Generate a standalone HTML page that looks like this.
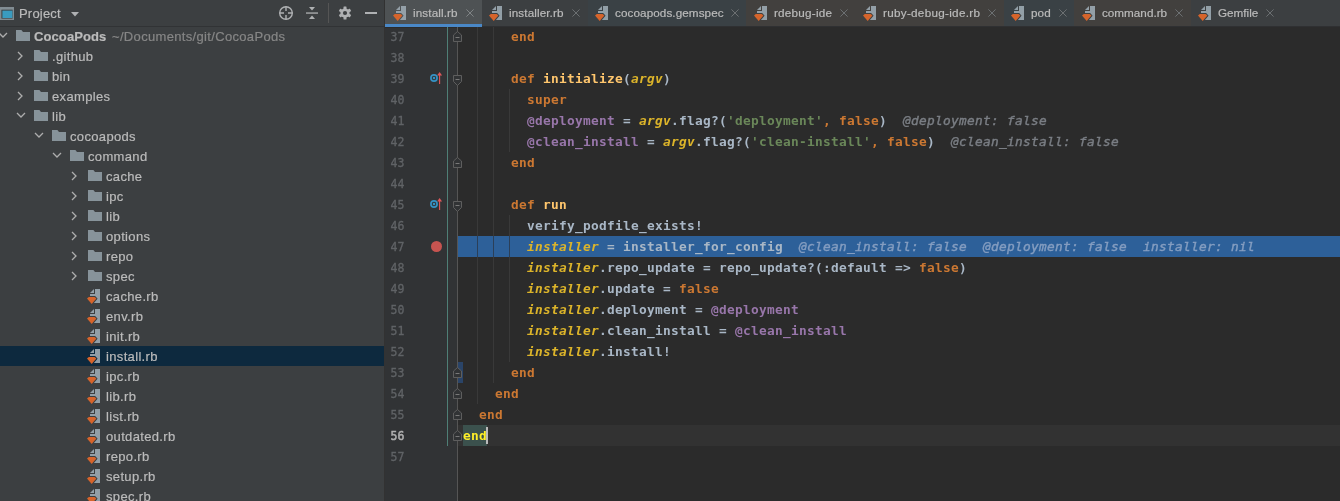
<!DOCTYPE html>
<html lang="en"><head><meta charset="utf-8"><title>CocoaPods – install.rb</title>
<style>
*{box-sizing:border-box}
html,body{margin:0;padding:0;background:#2b2b2b;overflow:hidden}
body{width:1340px;height:501px;position:relative;font-family:"Liberation Sans",Arial,sans-serif;font-size:13px;color:#bbbbbb}
#root{position:absolute;left:0;top:0;width:1340px;height:501px;overflow:hidden;background:#2b2b2b}
.abs,.ic,.t,.row,.tab,.ln,.code,.rect{position:absolute}
.ic{display:block;overflow:visible}
.t,.ln,.code{will-change:transform}
.t{white-space:pre;line-height:20px;height:20px;color:#bbbbbb;-webkit-text-stroke:0.2px}
#sidebar{position:absolute;left:0;top:0;width:384px;height:501px;background:#3c3f41;overflow:hidden}
#sbhead{position:absolute;left:0;top:0;width:384px;height:27px;z-index:2;background:#3c3f41;border-bottom:1px solid #313335}
#tabs{position:absolute;left:385px;top:0;width:955px;height:27px;background:#3c3f41;border-bottom:1px solid #2f3032}
.tab{top:0;height:26px}
.tt{font-size:11.7px}
#gutter{position:absolute;left:385px;top:28px;width:73px;height:473px;background:#313335}
.ln{left:385px;width:36px;text-align:left;padding-left:5.5px;padding-top:0.5px;font-family:"DejaVu Sans Mono","Liberation Mono",monospace;font-size:11.5px;line-height:21px;height:21px;color:#606366;-webkit-text-stroke:0.3px #606366;white-space:pre}
.code{left:463px;font-family:"DejaVu Sans Mono","Liberation Mono",monospace;font-size:12.8px;letter-spacing:0.2944px;line-height:21px;height:21px;color:#a9b7c6;white-space:pre}
.kw{color:#cc7832;font-weight:bold}
.fn{color:#ffc66d;font-weight:bold}
.pv{color:#dcb42a;font-weight:bold;font-style:italic}
.iv{color:#9876aa;font-weight:bold}
.id{color:#a9b7c6;font-weight:bold}
.st{color:#6a8759;font-weight:bold}
.hint{color:#7a7e84;font-style:italic;font-weight:normal;-webkit-text-stroke:0.4px #7a7e84}
.hint2{color:#849dc0;font-style:italic;font-weight:normal;-webkit-text-stroke:0.4px #849dc0}
</style></head><body><div id="root">

<div id="sidebar">
<div id="sbhead">
<svg class="ic" style="left:-1px;top:5px" width="16" height="16" viewBox="0 0 16 16">
<rect x="1.7" y="2.7" width="12.6" height="11.6" fill="none" stroke="#87939a" stroke-width="1.4" opacity=".9"/>
<rect x="1.7" y="2.7" width="12.6" height="2" fill="#87939a" opacity=".9"/>
<rect x="3.4" y="5.6" width="10" height="7.4" fill="#3a9bbf"/>
</svg>
<span class="t" style="left:19px;top:4px;letter-spacing:0.2px">Project</span>
<svg class="ic" style="left:70px;top:10px" width="10" height="8" viewBox="0 0 10 8"><path d="M1 2 L9 2 L5 6.6 Z" fill="#afb1b3"/></svg>
<svg class="ic" style="left:278px;top:5px" width="16" height="16" viewBox="0 0 16 16">
<circle cx="8" cy="8" r="6.3" fill="none" stroke="#afb1b3" stroke-width="1.4"/>
<path d="M8 1.5 V6 M8 10 V14.5 M1.5 8 H6 M10 8 H14.5" stroke="#afb1b3" stroke-width="1.4" fill="none"/>
</svg>
<svg class="ic" style="left:304px;top:5px" width="16" height="16" viewBox="0 0 16 16">
<rect x="2" y="7.4" width="12" height="1.3" fill="#afb1b3"/>
<path d="M5 2 L11 2 L8 5.4 Z" fill="#afb1b3"/>
<path d="M5 14 L11 14 L8 10.6 Z" fill="#afb1b3"/>
</svg>
<div class="rect" style="left:328px;top:3px;width:1px;height:20px;background:#555555"></div>
<svg class="ic" style="left:337px;top:5px" width="16" height="16" viewBox="0 0 16 16">
<g fill="#afb1b3"><circle cx="8" cy="8" r="4.6"/>
<g><rect x="6.5" y="1.6" width="3" height="12.8" rx=".5"/>
<rect x="6.5" y="1.6" width="3" height="12.8" rx=".5" transform="rotate(60 8 8)"/>
<rect x="6.5" y="1.6" width="3" height="12.8" rx=".5" transform="rotate(120 8 8)"/></g></g>
<circle cx="8" cy="8" r="2.1" fill="#3c3f41"/>
</svg>
<div class="rect" style="left:365px;top:12.2px;width:12px;height:1.6px;background:#afb1b3"></div>
</div>
<svg class="ic" style="left:-5.5px;top:27px" width="16" height="16" viewBox="0 0 16 16">
<path d="M4 6 L8 10 L12 6" fill="none" stroke="#adadad" stroke-width="1.3"/>
</svg>
<svg class="ic" style="left:15px;top:28px" width="16" height="16" viewBox="0 0 16 16">
<path d="M1 2 L6.4 2 L8 4.1 L15 4.1 L15 13 L1 13 Z" fill="#87939a"/>
</svg>
<span class="t" style="left:34px;top:27px;font-weight:bold;letter-spacing:0.1px">CocoaPods</span>
<span class="t" style="left:112px;top:27px;color:#868686;letter-spacing:0.33px">~/Documents/git/CocoaPods</span>
<svg class="ic" style="left:12px;top:47.7px" width="16" height="16" viewBox="0 0 16 16">
<path d="M6 4 L10 8 L6 12" fill="none" stroke="#adadad" stroke-width="1.3"/>
</svg>
<svg class="ic" style="left:33px;top:48px" width="16" height="16" viewBox="0 0 16 16">
<path d="M1 2 L6.4 2 L8 4.1 L15 4.1 L15 13 L1 13 Z" fill="#87939a"/>
</svg>
<span class="t" style="left:52px;top:47px;letter-spacing:0.34px">.github</span>
<svg class="ic" style="left:12px;top:67.7px" width="16" height="16" viewBox="0 0 16 16">
<path d="M6 4 L10 8 L6 12" fill="none" stroke="#adadad" stroke-width="1.3"/>
</svg>
<svg class="ic" style="left:33px;top:68px" width="16" height="16" viewBox="0 0 16 16">
<path d="M1 2 L6.4 2 L8 4.1 L15 4.1 L15 13 L1 13 Z" fill="#87939a"/>
</svg>
<span class="t" style="left:52px;top:67px;letter-spacing:0.34px">bin</span>
<svg class="ic" style="left:12px;top:87.7px" width="16" height="16" viewBox="0 0 16 16">
<path d="M6 4 L10 8 L6 12" fill="none" stroke="#adadad" stroke-width="1.3"/>
</svg>
<svg class="ic" style="left:33px;top:88px" width="16" height="16" viewBox="0 0 16 16">
<path d="M1 2 L6.4 2 L8 4.1 L15 4.1 L15 13 L1 13 Z" fill="#87939a"/>
</svg>
<span class="t" style="left:52px;top:87px;letter-spacing:0.34px">examples</span>
<svg class="ic" style="left:12.5px;top:107px" width="16" height="16" viewBox="0 0 16 16">
<path d="M4 6 L8 10 L12 6" fill="none" stroke="#adadad" stroke-width="1.3"/>
</svg>
<svg class="ic" style="left:33px;top:108px" width="16" height="16" viewBox="0 0 16 16">
<path d="M1 2 L6.4 2 L8 4.1 L15 4.1 L15 13 L1 13 Z" fill="#87939a"/>
</svg>
<span class="t" style="left:52px;top:107px;letter-spacing:0.34px">lib</span>
<svg class="ic" style="left:30.5px;top:127px" width="16" height="16" viewBox="0 0 16 16">
<path d="M4 6 L8 10 L12 6" fill="none" stroke="#adadad" stroke-width="1.3"/>
</svg>
<svg class="ic" style="left:51px;top:128px" width="16" height="16" viewBox="0 0 16 16">
<path d="M1 2 L6.4 2 L8 4.1 L15 4.1 L15 13 L1 13 Z" fill="#87939a"/>
</svg>
<span class="t" style="left:70px;top:127px;letter-spacing:0.34px">cocoapods</span>
<svg class="ic" style="left:48.5px;top:147px" width="16" height="16" viewBox="0 0 16 16">
<path d="M4 6 L8 10 L12 6" fill="none" stroke="#adadad" stroke-width="1.3"/>
</svg>
<svg class="ic" style="left:69px;top:148px" width="16" height="16" viewBox="0 0 16 16">
<path d="M1 2 L6.4 2 L8 4.1 L15 4.1 L15 13 L1 13 Z" fill="#87939a"/>
</svg>
<span class="t" style="left:88px;top:147px;letter-spacing:0.34px">command</span>
<svg class="ic" style="left:66px;top:167.7px" width="16" height="16" viewBox="0 0 16 16">
<path d="M6 4 L10 8 L6 12" fill="none" stroke="#adadad" stroke-width="1.3"/>
</svg>
<svg class="ic" style="left:87px;top:168px" width="16" height="16" viewBox="0 0 16 16">
<path d="M1 2 L6.4 2 L8 4.1 L15 4.1 L15 13 L1 13 Z" fill="#87939a"/>
</svg>
<span class="t" style="left:106px;top:167px;letter-spacing:0.34px">cache</span>
<svg class="ic" style="left:66px;top:187.7px" width="16" height="16" viewBox="0 0 16 16">
<path d="M6 4 L10 8 L6 12" fill="none" stroke="#adadad" stroke-width="1.3"/>
</svg>
<svg class="ic" style="left:87px;top:188px" width="16" height="16" viewBox="0 0 16 16">
<path d="M1 2 L6.4 2 L8 4.1 L15 4.1 L15 13 L1 13 Z" fill="#87939a"/>
</svg>
<span class="t" style="left:106px;top:187px;letter-spacing:0.34px">ipc</span>
<svg class="ic" style="left:66px;top:207.7px" width="16" height="16" viewBox="0 0 16 16">
<path d="M6 4 L10 8 L6 12" fill="none" stroke="#adadad" stroke-width="1.3"/>
</svg>
<svg class="ic" style="left:87px;top:208px" width="16" height="16" viewBox="0 0 16 16">
<path d="M1 2 L6.4 2 L8 4.1 L15 4.1 L15 13 L1 13 Z" fill="#87939a"/>
</svg>
<span class="t" style="left:106px;top:207px;letter-spacing:0.34px">lib</span>
<svg class="ic" style="left:66px;top:227.7px" width="16" height="16" viewBox="0 0 16 16">
<path d="M6 4 L10 8 L6 12" fill="none" stroke="#adadad" stroke-width="1.3"/>
</svg>
<svg class="ic" style="left:87px;top:228px" width="16" height="16" viewBox="0 0 16 16">
<path d="M1 2 L6.4 2 L8 4.1 L15 4.1 L15 13 L1 13 Z" fill="#87939a"/>
</svg>
<span class="t" style="left:106px;top:227px;letter-spacing:0.34px">options</span>
<svg class="ic" style="left:66px;top:247.7px" width="16" height="16" viewBox="0 0 16 16">
<path d="M6 4 L10 8 L6 12" fill="none" stroke="#adadad" stroke-width="1.3"/>
</svg>
<svg class="ic" style="left:87px;top:248px" width="16" height="16" viewBox="0 0 16 16">
<path d="M1 2 L6.4 2 L8 4.1 L15 4.1 L15 13 L1 13 Z" fill="#87939a"/>
</svg>
<span class="t" style="left:106px;top:247px;letter-spacing:0.34px">repo</span>
<svg class="ic" style="left:66px;top:267.7px" width="16" height="16" viewBox="0 0 16 16">
<path d="M6 4 L10 8 L6 12" fill="none" stroke="#adadad" stroke-width="1.3"/>
</svg>
<svg class="ic" style="left:87px;top:268px" width="16" height="16" viewBox="0 0 16 16">
<path d="M1 2 L6.4 2 L8 4.1 L15 4.1 L15 13 L1 13 Z" fill="#87939a"/>
</svg>
<span class="t" style="left:106px;top:267px;letter-spacing:0.34px">spec</span>
<svg class="ic" style="left:87px;top:288px" width="16" height="16" viewBox="0 0 16 16">
<g fill="#9aa7b0" fill-opacity=".92"><path d="M7 1 L3 5 H7 Z"/>
<path d="M8 1 H13 V15 H6.9 L10.15 11.26 L10.5 10.4 L8.1 8 H3 V6 H8 Z"/></g>
<path d="M0 10.6 L1.8 9 H7.6 L9.4 10.6 L4.7 16 Z" fill="#d6642b"/>
</svg>
<span class="t" style="left:106px;top:287px;letter-spacing:0.34px">cache.rb</span>
<svg class="ic" style="left:87px;top:308px" width="16" height="16" viewBox="0 0 16 16">
<g fill="#9aa7b0" fill-opacity=".92"><path d="M7 1 L3 5 H7 Z"/>
<path d="M8 1 H13 V15 H6.9 L10.15 11.26 L10.5 10.4 L8.1 8 H3 V6 H8 Z"/></g>
<path d="M0 10.6 L1.8 9 H7.6 L9.4 10.6 L4.7 16 Z" fill="#d6642b"/>
</svg>
<span class="t" style="left:106px;top:307px;letter-spacing:0.34px">env.rb</span>
<svg class="ic" style="left:87px;top:328px" width="16" height="16" viewBox="0 0 16 16">
<g fill="#9aa7b0" fill-opacity=".92"><path d="M7 1 L3 5 H7 Z"/>
<path d="M8 1 H13 V15 H6.9 L10.15 11.26 L10.5 10.4 L8.1 8 H3 V6 H8 Z"/></g>
<path d="M0 10.6 L1.8 9 H7.6 L9.4 10.6 L4.7 16 Z" fill="#d6642b"/>
</svg>
<span class="t" style="left:106px;top:327px;letter-spacing:0.34px">init.rb</span>
<div class="rect" style="left:0;top:346px;width:384px;height:20px;background:#0d293e"></div>
<svg class="ic" style="left:87px;top:348px" width="16" height="16" viewBox="0 0 16 16">
<g fill="#9aa7b0" fill-opacity=".92"><path d="M7 1 L3 5 H7 Z"/>
<path d="M8 1 H13 V15 H6.9 L10.15 11.26 L10.5 10.4 L8.1 8 H3 V6 H8 Z"/></g>
<path d="M0 10.6 L1.8 9 H7.6 L9.4 10.6 L4.7 16 Z" fill="#d6642b"/>
</svg>
<span class="t" style="left:106px;top:347px;letter-spacing:0.34px">install.rb</span>
<svg class="ic" style="left:87px;top:368px" width="16" height="16" viewBox="0 0 16 16">
<g fill="#9aa7b0" fill-opacity=".92"><path d="M7 1 L3 5 H7 Z"/>
<path d="M8 1 H13 V15 H6.9 L10.15 11.26 L10.5 10.4 L8.1 8 H3 V6 H8 Z"/></g>
<path d="M0 10.6 L1.8 9 H7.6 L9.4 10.6 L4.7 16 Z" fill="#d6642b"/>
</svg>
<span class="t" style="left:106px;top:367px;letter-spacing:0.34px">ipc.rb</span>
<svg class="ic" style="left:87px;top:388px" width="16" height="16" viewBox="0 0 16 16">
<g fill="#9aa7b0" fill-opacity=".92"><path d="M7 1 L3 5 H7 Z"/>
<path d="M8 1 H13 V15 H6.9 L10.15 11.26 L10.5 10.4 L8.1 8 H3 V6 H8 Z"/></g>
<path d="M0 10.6 L1.8 9 H7.6 L9.4 10.6 L4.7 16 Z" fill="#d6642b"/>
</svg>
<span class="t" style="left:106px;top:387px;letter-spacing:0.34px">lib.rb</span>
<svg class="ic" style="left:87px;top:408px" width="16" height="16" viewBox="0 0 16 16">
<g fill="#9aa7b0" fill-opacity=".92"><path d="M7 1 L3 5 H7 Z"/>
<path d="M8 1 H13 V15 H6.9 L10.15 11.26 L10.5 10.4 L8.1 8 H3 V6 H8 Z"/></g>
<path d="M0 10.6 L1.8 9 H7.6 L9.4 10.6 L4.7 16 Z" fill="#d6642b"/>
</svg>
<span class="t" style="left:106px;top:407px;letter-spacing:0.34px">list.rb</span>
<svg class="ic" style="left:87px;top:428px" width="16" height="16" viewBox="0 0 16 16">
<g fill="#9aa7b0" fill-opacity=".92"><path d="M7 1 L3 5 H7 Z"/>
<path d="M8 1 H13 V15 H6.9 L10.15 11.26 L10.5 10.4 L8.1 8 H3 V6 H8 Z"/></g>
<path d="M0 10.6 L1.8 9 H7.6 L9.4 10.6 L4.7 16 Z" fill="#d6642b"/>
</svg>
<span class="t" style="left:106px;top:427px;letter-spacing:0.34px">outdated.rb</span>
<svg class="ic" style="left:87px;top:448px" width="16" height="16" viewBox="0 0 16 16">
<g fill="#9aa7b0" fill-opacity=".92"><path d="M7 1 L3 5 H7 Z"/>
<path d="M8 1 H13 V15 H6.9 L10.15 11.26 L10.5 10.4 L8.1 8 H3 V6 H8 Z"/></g>
<path d="M0 10.6 L1.8 9 H7.6 L9.4 10.6 L4.7 16 Z" fill="#d6642b"/>
</svg>
<span class="t" style="left:106px;top:447px;letter-spacing:0.34px">repo.rb</span>
<svg class="ic" style="left:87px;top:468px" width="16" height="16" viewBox="0 0 16 16">
<g fill="#9aa7b0" fill-opacity=".92"><path d="M7 1 L3 5 H7 Z"/>
<path d="M8 1 H13 V15 H6.9 L10.15 11.26 L10.5 10.4 L8.1 8 H3 V6 H8 Z"/></g>
<path d="M0 10.6 L1.8 9 H7.6 L9.4 10.6 L4.7 16 Z" fill="#d6642b"/>
</svg>
<span class="t" style="left:106px;top:467px;letter-spacing:0.34px">setup.rb</span>
<svg class="ic" style="left:87px;top:488px" width="16" height="16" viewBox="0 0 16 16">
<g fill="#9aa7b0" fill-opacity=".92"><path d="M7 1 L3 5 H7 Z"/>
<path d="M8 1 H13 V15 H6.9 L10.15 11.26 L10.5 10.4 L8.1 8 H3 V6 H8 Z"/></g>
<path d="M0 10.6 L1.8 9 H7.6 L9.4 10.6 L4.7 16 Z" fill="#d6642b"/>
</svg>
<span class="t" style="left:106px;top:487px;letter-spacing:0.34px">spec.rb</span>
</div>
<div class="rect" style="left:384px;top:0;width:1px;height:501px;background:#323232"></div>
<div id="tabs"></div>
<div class="tab" style="left:385px;width:97px;background:#4e5254"></div>
<svg class="ic" style="left:393px;top:5px" width="16" height="16" viewBox="0 0 16 16">
<g fill="#9aa7b0" fill-opacity=".92"><path d="M7 1 L3 5 H7 Z"/>
<path d="M8 1 H13 V15 H6.9 L10.15 11.26 L10.5 10.4 L8.1 8 H3 V6 H8 Z"/></g>
<path d="M0 10.6 L1.8 9 H7.6 L9.4 10.6 L4.7 16 Z" fill="#d6642b"/>
</svg>
<span class="t tt" style="left:413px;top:3px;letter-spacing:0.11px">install.rb</span>
<svg class="ic" style="left:462.2px;top:5px" width="16" height="16" viewBox="0 0 16 16"><path d="M4.4 4.4 L11.6 11.6 M11.6 4.4 L4.4 11.6" stroke="#808486" stroke-width="1" fill="none"/></svg>
<div class="rect" style="left:385px;top:24px;width:97px;height:3px;background:#4a88c7"></div>
<svg class="ic" style="left:489px;top:5px" width="16" height="16" viewBox="0 0 16 16">
<g fill="#9aa7b0" fill-opacity=".92"><path d="M7 1 L3 5 H7 Z"/>
<path d="M8 1 H13 V15 H6.9 L10.15 11.26 L10.5 10.4 L8.1 8 H3 V6 H8 Z"/></g>
<path d="M0 10.6 L1.8 9 H7.6 L9.4 10.6 L4.7 16 Z" fill="#d6642b"/>
</svg>
<span class="t tt" style="left:509.2px;top:3px;letter-spacing:0.11px">installer.rb</span>
<svg class="ic" style="left:568px;top:5px" width="16" height="16" viewBox="0 0 16 16"><path d="M4.4 4.4 L11.6 11.6 M11.6 4.4 L4.4 11.6" stroke="#6c7072" stroke-width="1" fill="none"/></svg>
<div class="tab" style="left:588px;width:158px;background:#3a4145"></div>
<svg class="ic" style="left:595.3px;top:5px" width="16" height="16" viewBox="0 0 16 16">
<g fill="#9aa7b0" fill-opacity=".92"><path d="M7 1 L3 5 H7 Z"/>
<path d="M8 1 H13 V15 H6.9 L10.15 11.26 L10.5 10.4 L8.1 8 H3 V6 H8 Z"/></g>
<path d="M0 10.6 L1.8 9 H7.6 L9.4 10.6 L4.7 16 Z" fill="#d6642b"/>
</svg>
<span class="t tt" style="left:614.6px;top:3px;letter-spacing:0.09px">cocoapods.gemspec</span>
<svg class="ic" style="left:727px;top:5px" width="16" height="16" viewBox="0 0 16 16"><path d="M4.4 4.4 L11.6 11.6 M11.6 4.4 L4.4 11.6" stroke="#6c7072" stroke-width="1" fill="none"/></svg>
<div class="tab" style="left:746px;width:110px;background:#42403e"></div>
<svg class="ic" style="left:754px;top:5px" width="16" height="16" viewBox="0 0 16 16">
<g fill="#9aa7b0" fill-opacity=".92"><path d="M7 1 L3 5 H7 Z"/>
<path d="M8 1 H13 V15 H6.9 L10.15 11.26 L10.5 10.4 L8.1 8 H3 V6 H8 Z"/></g>
<path d="M0 10.6 L1.8 9 H7.6 L9.4 10.6 L4.7 16 Z" fill="#d6642b"/>
</svg>
<span class="t tt" style="left:773.8px;top:3px;letter-spacing:0.23px">rdebug-ide</span>
<svg class="ic" style="left:836px;top:5px" width="16" height="16" viewBox="0 0 16 16"><path d="M4.4 4.4 L11.6 11.6 M11.6 4.4 L4.4 11.6" stroke="#6c7072" stroke-width="1" fill="none"/></svg>
<div class="tab" style="left:856px;width:148px;background:#42403e"></div>
<svg class="ic" style="left:862.8px;top:5px" width="16" height="16" viewBox="0 0 16 16">
<g fill="#9aa7b0" fill-opacity=".92"><path d="M7 1 L3 5 H7 Z"/>
<path d="M8 1 H13 V15 H6.9 L10.15 11.26 L10.5 10.4 L8.1 8 H3 V6 H8 Z"/></g>
<path d="M0 10.6 L1.8 9 H7.6 L9.4 10.6 L4.7 16 Z" fill="#d6642b"/>
</svg>
<span class="t tt" style="left:883px;top:3px;letter-spacing:0.29px">ruby-debug-ide.rb</span>
<svg class="ic" style="left:984px;top:5px" width="16" height="16" viewBox="0 0 16 16"><path d="M4.4 4.4 L11.6 11.6 M11.6 4.4 L4.4 11.6" stroke="#6c7072" stroke-width="1" fill="none"/></svg>
<div class="tab" style="left:1004px;width:70px;background:#3a4145"></div>
<svg class="ic" style="left:1010.8px;top:5px" width="16" height="16" viewBox="0 0 16 16">
<g fill="#9aa7b0" fill-opacity=".92"><path d="M7 1 L3 5 H7 Z"/>
<path d="M8 1 H13 V15 H6.9 L10.15 11.26 L10.5 10.4 L8.1 8 H3 V6 H8 Z"/></g>
<path d="M0 10.6 L1.8 9 H7.6 L9.4 10.6 L4.7 16 Z" fill="#d6642b"/>
</svg>
<span class="t tt" style="left:1031px;top:3px;letter-spacing:0.11px">pod</span>
<svg class="ic" style="left:1055px;top:5px" width="16" height="16" viewBox="0 0 16 16"><path d="M4.4 4.4 L11.6 11.6 M11.6 4.4 L4.4 11.6" stroke="#6c7072" stroke-width="1" fill="none"/></svg>
<div class="tab" style="left:1074px;width:117px;background:#42403e"></div>
<svg class="ic" style="left:1082px;top:5px" width="16" height="16" viewBox="0 0 16 16">
<g fill="#9aa7b0" fill-opacity=".92"><path d="M7 1 L3 5 H7 Z"/>
<path d="M8 1 H13 V15 H6.9 L10.15 11.26 L10.5 10.4 L8.1 8 H3 V6 H8 Z"/></g>
<path d="M0 10.6 L1.8 9 H7.6 L9.4 10.6 L4.7 16 Z" fill="#d6642b"/>
</svg>
<span class="t tt" style="left:1102px;top:3px;letter-spacing:0.01px">command.rb</span>
<svg class="ic" style="left:1171.2px;top:5px" width="16" height="16" viewBox="0 0 16 16"><path d="M4.4 4.4 L11.6 11.6 M11.6 4.4 L4.4 11.6" stroke="#6c7072" stroke-width="1" fill="none"/></svg>
<svg class="ic" style="left:1198px;top:5px" width="16" height="16" viewBox="0 0 16 16">
<g fill="#9aa7b0" fill-opacity=".92"><path d="M7 1 L3 5 H7 Z"/>
<path d="M8 1 H13 V15 H6.9 L10.15 11.26 L10.5 10.4 L8.1 8 H3 V6 H8 Z"/></g>
<path d="M0 10.6 L1.8 9 H7.6 L9.4 10.6 L4.7 16 Z" fill="#d6642b"/>
</svg>
<span class="t tt" style="left:1218.2px;top:3px;letter-spacing:0.01px">Gemfile</span>
<svg class="ic" style="left:1262.3px;top:5px" width="16" height="16" viewBox="0 0 16 16"><path d="M4.4 4.4 L11.6 11.6 M11.6 4.4 L4.4 11.6" stroke="#6c7072" stroke-width="1" fill="none"/></svg>
<div id="gutter"></div>
<div class="rect" style="left:458px;top:425px;width:882px;height:21px;background:#323232"></div>
<div class="rect" style="left:458px;top:236px;width:882px;height:21px;background:#2d6099"></div>
<div class="rect" style="left:458px;top:362px;width:5px;height:21px;background:#2a4468"></div>
<div class="rect" style="left:463px;top:425px;width:24px;height:21px;background:#3b514d"></div>
<div class="rect" style="left:477px;top:27px;width:1px;height:377px;background:#393939"></div>
<div class="rect" style="left:493px;top:27px;width:1px;height:356px;background:#393939"></div>
<div class="rect" style="left:509px;top:89px;width:1px;height:63px;background:#393939"></div>
<div class="rect" style="left:509px;top:215px;width:1px;height:147px;background:#393939"></div>
<div class="rect" style="left:477px;top:236px;width:1px;height:21px;background:#2b3f58"></div>
<div class="rect" style="left:493px;top:236px;width:1px;height:21px;background:#2b3f58"></div>
<div class="rect" style="left:509px;top:236px;width:1px;height:21px;background:#2b3f58"></div>
<div class="rect" style="left:447px;top:27px;width:1px;height:419px;background:#4f7f76"></div>
<div class="rect" style="left:457px;top:27px;width:1px;height:474px;background:#555555"></div>
<svg class="ic" style="left:452px;top:30px" width="12" height="13" viewBox="0 0 12 13">
<path d="M1.5 11.5 H9.5 V5 L5.5 1.5 L1.5 5 Z" fill="#313335" stroke="#5e5e5e" stroke-width="1"/>
<path d="M3.5 7.5 H7.5" stroke="#787878" stroke-width="1"/></svg>
<svg class="ic" style="left:452px;top:156px" width="12" height="13" viewBox="0 0 12 13">
<path d="M1.5 11.5 H9.5 V5 L5.5 1.5 L1.5 5 Z" fill="#313335" stroke="#5e5e5e" stroke-width="1"/>
<path d="M3.5 7.5 H7.5" stroke="#787878" stroke-width="1"/></svg>
<svg class="ic" style="left:452px;top:366px" width="12" height="13" viewBox="0 0 12 13">
<path d="M1.5 11.5 H9.5 V5 L5.5 1.5 L1.5 5 Z" fill="#313335" stroke="#5e5e5e" stroke-width="1"/>
<path d="M3.5 7.5 H7.5" stroke="#787878" stroke-width="1"/></svg>
<svg class="ic" style="left:452px;top:387px" width="12" height="13" viewBox="0 0 12 13">
<path d="M1.5 11.5 H9.5 V5 L5.5 1.5 L1.5 5 Z" fill="#313335" stroke="#5e5e5e" stroke-width="1"/>
<path d="M3.5 7.5 H7.5" stroke="#787878" stroke-width="1"/></svg>
<svg class="ic" style="left:452px;top:408px" width="12" height="13" viewBox="0 0 12 13">
<path d="M1.5 11.5 H9.5 V5 L5.5 1.5 L1.5 5 Z" fill="#313335" stroke="#5e5e5e" stroke-width="1"/>
<path d="M3.5 7.5 H7.5" stroke="#787878" stroke-width="1"/></svg>
<svg class="ic" style="left:452px;top:429px" width="12" height="13" viewBox="0 0 12 13">
<path d="M1.5 11.5 H9.5 V5 L5.5 1.5 L1.5 5 Z" fill="#313335" stroke="#5e5e5e" stroke-width="1"/>
<path d="M3.5 7.5 H7.5" stroke="#787878" stroke-width="1"/></svg>
<svg class="ic" style="left:452px;top:74px" width="12" height="13" viewBox="0 0 12 13">
<path d="M1.5 1.5 H9.5 V7.5 L5.5 11.5 L1.5 7.5 Z" fill="#313335" stroke="#5e5e5e" stroke-width="1"/>
<path d="M3.5 5.5 H7.5" stroke="#787878" stroke-width="1"/></svg>
<svg class="ic" style="left:452px;top:200px" width="12" height="13" viewBox="0 0 12 13">
<path d="M1.5 1.5 H9.5 V7.5 L5.5 11.5 L1.5 7.5 Z" fill="#313335" stroke="#5e5e5e" stroke-width="1"/>
<path d="M3.5 5.5 H7.5" stroke="#787878" stroke-width="1"/></svg>
<svg class="ic" style="left:428px;top:70px" width="16" height="16" viewBox="0 0 16 16">
<circle cx="6" cy="8" r="3.1" fill="none" stroke="#3592c4" stroke-width="1.7"/><circle cx="6" cy="8" r="1.25" fill="#3592c4"/>
<path d="M11.6 14 V4" stroke="#e0585a" stroke-width="1.1" fill="none"/><path d="M9.1 5.4 L11.6 1.9 L14.1 5.4 Z" fill="#e0585a"/></svg>
<svg class="ic" style="left:428px;top:196px" width="16" height="16" viewBox="0 0 16 16">
<circle cx="6" cy="8" r="3.1" fill="none" stroke="#3592c4" stroke-width="1.7"/><circle cx="6" cy="8" r="1.25" fill="#3592c4"/>
<path d="M11.6 14 V4" stroke="#e0585a" stroke-width="1.1" fill="none"/><path d="M9.1 5.4 L11.6 1.9 L14.1 5.4 Z" fill="#e0585a"/></svg>
<div class="rect" style="left:430.5px;top:240.5px;width:11px;height:11px;border-radius:6px;background:#c75450"></div>
<div class="ln" style="top:26px">37</div>
<div class="ln" style="top:47px">38</div>
<div class="ln" style="top:68px">39</div>
<div class="ln" style="top:89px">40</div>
<div class="ln" style="top:110px">41</div>
<div class="ln" style="top:131px">42</div>
<div class="ln" style="top:152px">43</div>
<div class="ln" style="top:173px">44</div>
<div class="ln" style="top:194px">45</div>
<div class="ln" style="top:215px">46</div>
<div class="ln" style="top:236px">47</div>
<div class="ln" style="top:257px">48</div>
<div class="ln" style="top:278px">49</div>
<div class="ln" style="top:299px">50</div>
<div class="ln" style="top:320px">51</div>
<div class="ln" style="top:341px">52</div>
<div class="ln" style="top:362px">53</div>
<div class="ln" style="top:383px">54</div>
<div class="ln" style="top:404px">55</div>
<div class="ln" style="top:425px;color:#b0b0b0;-webkit-text-stroke:0.5px #b0b0b0">56</div>
<div class="ln" style="top:446px">57</div>
<div class="code" style="top:26px">      <span class="kw">end</span></div>
<div class="code" style="top:68px">      <span class="kw">def</span> <span class="fn">initialize</span><span class="id">(</span><span class="pv">argv</span><span class="id">)</span></div>
<div class="code" style="top:89px">        <span class="kw">super</span></div>
<div class="code" style="top:110px">        <span class="iv">@deployment</span><span class="id"> = </span><span class="pv">argv</span><span class="id">.flag?(</span><span class="st">&#x27;deployment&#x27;</span><span class="kw">, false</span><span class="id">)</span>  <span class="hint">@deployment: false</span></div>
<div class="code" style="top:131px">        <span class="iv">@clean_install</span><span class="id"> = </span><span class="pv">argv</span><span class="id">.flag?(</span><span class="st">&#x27;clean-install&#x27;</span><span class="kw">, false</span><span class="id">)</span>  <span class="hint">@clean_install: false</span></div>
<div class="code" style="top:152px">      <span class="kw">end</span></div>
<div class="code" style="top:194px">      <span class="kw">def</span> <span class="fn">run</span></div>
<div class="code" style="top:215px">        <span class="id">verify_podfile_exists!</span></div>
<div class="code" style="top:236px">        <span class="pv">installer</span><span class="id"> = installer_for_config</span>  <span class="hint2">@clean_install: false</span>  <span class="hint2">@deployment: false</span>  <span class="hint2">installer: nil</span></div>
<div class="code" style="top:257px">        <span class="pv">installer</span><span class="id">.repo_update = repo_update?(:default =&gt; </span><span class="kw">false</span><span class="id">)</span></div>
<div class="code" style="top:278px">        <span class="pv">installer</span><span class="id">.update = </span><span class="kw">false</span></div>
<div class="code" style="top:299px">        <span class="pv">installer</span><span class="id">.deployment = </span><span class="iv">@deployment</span></div>
<div class="code" style="top:320px">        <span class="pv">installer</span><span class="id">.clean_install = </span><span class="iv">@clean_install</span></div>
<div class="code" style="top:341px">        <span class="pv">installer</span><span class="id">.install!</span></div>
<div class="code" style="top:362px">      <span class="kw">end</span></div>
<div class="code" style="top:383px">    <span class="kw">end</span></div>
<div class="code" style="top:404px">  <span class="kw">end</span></div>
<div class="code" style="top:425px"><span class="kw" style="color:#ffef28">end</span></div>
<div class="rect" style="left:486px;top:427px;width:2px;height:17px;background:#bbbbbb"></div>
</div></body></html>
